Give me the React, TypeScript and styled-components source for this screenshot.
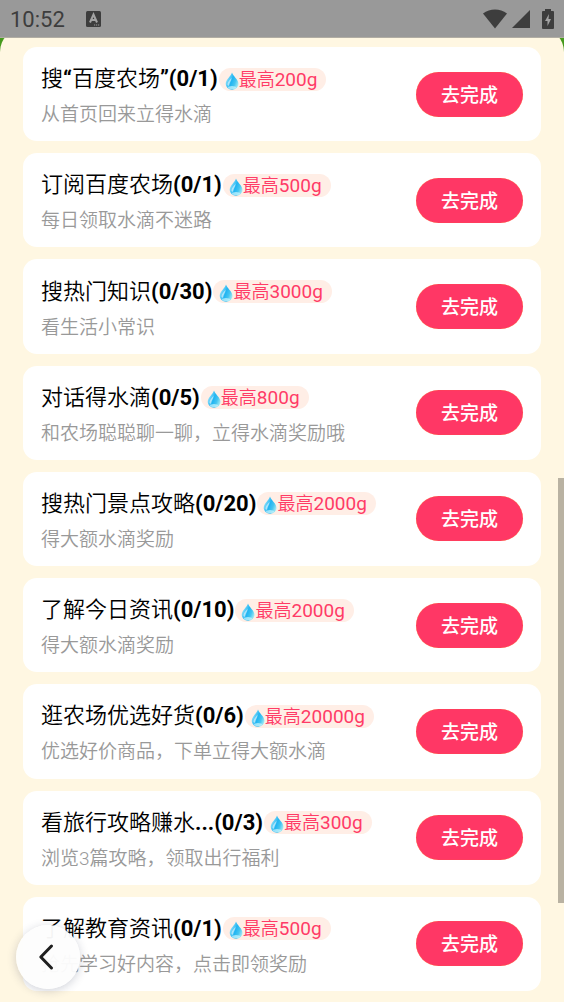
import React from "react";
import styled, { createGlobalStyle } from "styled-components";

const GlobalStyle = createGlobalStyle`
  * { box-sizing: border-box; }
  body {
    margin: 0;
    background: #469a1d;
    font-family: Roboto, "Noto Sans CJK SC", sans-serif;
    scrollbar-width: none;
  }
  body::-webkit-scrollbar { display: none; }
`;

const Page = styled.div`
  min-height: 100vh;
  padding-top: 28px;
  display: flex;
  flex-direction: column;
`;

const StatusBar = styled.header`
  position: fixed;
  inset: 0 0 auto;
  z-index: 2;
  height: 38px;
  padding: 0 10px;
  display: flex;
  align-items: center;
  justify-content: space-between;
  background: #999999;
  border-bottom: 1px solid #b1ada3;
  color: #3d3d3d;
`;

const StatusGroup = styled.div<{ $gap: number }>`
  display: flex;
  align-items: center;
  gap: ${({ $gap }) => $gap}px;

  svg { display: block; }
`;

const Clock = styled.time`
  padding-top: 2px;
  font-size: 22px;
  line-height: 26px;
`;

const BatterySlot = styled.span`
  padding-left: 7px;
`;

const Sheet = styled.main`
  flex: 1;
  display: flex;
  padding: 19px 23px 11px;
  border-radius: 24px 24px 0 0;
  background: #fff7e2;
`;

const TaskList = styled.ul`
  flex: 1;
  min-width: 0;
  margin: 0;
  padding: 0;
  list-style: none;
  display: grid;
  grid-auto-rows: 1fr;
  gap: 12px;
`;

const Card = styled.li`
  display: flex;
  align-items: center;
  justify-content: space-between;
  gap: 12px;
  padding: 8px 18px;
  border-radius: 14px;
  background: #ffffff;
`;

const TaskText = styled.div`
  min-width: 0;
  padding-top: 6px;
`;

const TitleRow = styled.div`
  display: flex;
  align-items: center;
  gap: 1px;
`;

const Title = styled.h2`
  margin: 0;
  font-size: 22px;
  line-height: 36px;
  font-weight: 350;
  color: #000000;
  white-space: nowrap;
`;

const Strong = styled.span`
  font-weight: 700;
`;

const Badge = styled.span`
  display: flex;
  align-items: center;
  height: 23px;
  padding: 0 9px 0 6px;
  border-radius: 12px;
  background: #ffeee6;
  color: #ff3b66;
  font-size: 18px;
  font-weight: 350;
  line-height: 23px;
  white-space: nowrap;

  svg { margin-top: 3px; }
`;

const Amount = styled.span`
  font-size: 19px;
  font-weight: 400;
`;

const Description = styled.p`
  margin: 0;
  font-size: 19px;
  font-weight: 350;
  line-height: 36px;
  color: #999999;
  white-space: nowrap;
`;

const GoButton = styled.button`
  flex: none;
  width: 107px;
  height: 45px;
  padding: 3px 0 0;
  border: 0;
  border-radius: 23px;
  background: #ff3765;
  box-shadow: inset 0 0 1px #ff7a1a;
  color: #ffffff;
  font-family: inherit;
  font-size: 19px;
  font-weight: 500;
  line-height: 28px;
  cursor: pointer;
`;

const BackButton = styled.button`
  position: fixed;
  left: 16px;
  bottom: 13px;
  z-index: 3;
  width: 64px;
  height: 64px;
  padding: 0 4px 0 0;
  border: 0;
  border-radius: 50%;
  display: grid;
  place-items: center;
  background: rgba(253, 253, 253, 0.96);
  box-shadow: 0 2px 10px rgba(40, 50, 80, 0.22);
  color: #1f1f1f;
  cursor: pointer;
`;

const ScrollThumb = styled.div`
  position: fixed;
  right: 0;
  bottom: 99px;
  z-index: 1;
  width: 6px;
  height: 425px;
  background: #b9b2a2;
`;

const DropIcon = () => (
  <svg width="14" height="18" viewBox="0 0 14 18" aria-hidden="true">
    <defs>
      <linearGradient id="drop" x1="0" y1="0.3" x2="1" y2="0.8">
        <stop offset="0" stopColor="#a5e9fc" />
        <stop offset="0.45" stopColor="#22b5f2" />
        <stop offset="0.7" stopColor="#45c5f0" />
        <stop offset="1" stopColor="#b9f2f4" />
      </linearGradient>
    </defs>
    <path
      d="M7 0.500C8 4 13.500 7.500 13.500 12A6.300 5.700 0 0 1 0.700 12C0.700 7.500 6 4 7 0.500Z"
      fill="url(#drop)"
    />
    <path d="M2.500 13C2.500 9.500 5 8 6.500 5.500C6.500 9 4.500 10 4 14Z" fill="#ffffff" opacity="0.55" />
    <ellipse cx="7" cy="15.500" rx="4" ry="1.500" fill="#d8fbff" opacity="0.65" />
  </svg>
);

const KeyboardIcon = () => (
  <svg width="15" height="16" viewBox="0 0 15 16" aria-hidden="true">
    <rect width="15" height="16" rx="1.500" fill="#3d3d3d" />
    <path
      d="M4 11.500L7.500 3.500L11 11.500M5.200 9H9.800"
      fill="none"
      stroke="#a3a3a3"
      strokeWidth="2"
    />
    <path d="M8 14h1.200M10 14h1.200M12 14h1.200" stroke="#999999" strokeWidth="1.200" />
  </svg>
);

const WifiIcon = () => (
  <svg width="24" height="20" viewBox="0 0 24 20" aria-hidden="true">
    <path d="M0 4.500C7 -0.800 17 -0.800 24 4.500L12 19.500Z" fill="currentColor" />
  </svg>
);

const SignalIcon = () => (
  <svg width="18" height="18" viewBox="0 0 18 18" aria-hidden="true">
    <path d="M18 0V18H0Z" fill="currentColor" />
  </svg>
);

const BatteryIcon = () => (
  <svg width="12" height="20" viewBox="0 0 12 20" aria-hidden="true">
    <path
      d="M3 0H9V2H11Q12 2 12 3V19Q12 20 11 20H1Q0 20 0 19V3Q0 2 1 2H3Z"
      fill="currentColor"
    />
    <path d="M7 5L3 12H5.500V17L9 10H6.500Z" fill="#a3a3a3" />
  </svg>
);

const ChevronIcon = () => (
  <svg width="16" height="28" viewBox="0 0 16 28" aria-hidden="true">
    <path
      d="M13.500 3L2.800 14L13.500 25"
      fill="none"
      stroke="currentColor"
      strokeWidth="3"
      strokeLinecap="round"
      strokeLinejoin="round"
    />
  </svg>
);

interface Task {
  title: React.ReactNode;
  progress: string;
  amount: string;
  description: string;
}

const tasks: Task[] = [
  {
    title: <>搜<Strong>“</Strong>百度农场<Strong>”</Strong></>,
    progress: "(0/1)",
    amount: "200g",
    description: "从首页回来立得水滴",
  },
  { title: "订阅百度农场", progress: "(0/1)", amount: "500g", description: "每日领取水滴不迷路" },
  { title: "搜热门知识", progress: "(0/30)", amount: "3000g", description: "看生活小常识" },
  { title: "对话得水滴", progress: "(0/5)", amount: "800g", description: "和农场聪聪聊一聊，立得水滴奖励哦" },
  { title: "搜热门景点攻略", progress: "(0/20)", amount: "2000g", description: "得大额水滴奖励" },
  { title: "了解今日资讯", progress: "(0/10)", amount: "2000g", description: "得大额水滴奖励" },
  { title: "逛农场优选好货", progress: "(0/6)", amount: "20000g", description: "优选好价商品，下单立得大额水滴" },
  {
    title: <>看旅行攻略赚水<Strong>...</Strong></>,
    progress: "(0/3)",
    amount: "300g",
    description: "浏览3篇攻略，领取出行福利",
  },
  { title: "了解教育资讯", progress: "(0/1)", amount: "500g", description: "抢先学习好内容，点击即领奖励" },
];

export default function App() {
  return (
    <>
      <GlobalStyle />
      <Page lang="zh-CN">
        <StatusBar>
          <StatusGroup $gap={21}>
            <Clock>10:52</Clock>
            <KeyboardIcon />
          </StatusGroup>
          <StatusGroup $gap={5}>
            <WifiIcon />
            <SignalIcon />
            <BatterySlot>
              <BatteryIcon />
            </BatterySlot>
          </StatusGroup>
        </StatusBar>
        <Sheet>
          <TaskList>
            {tasks.map((task, index) => (
              <Card key={index}>
                <TaskText>
                  <TitleRow>
                    <Title>
                      {task.title}
                      <Strong>{task.progress}</Strong>
                    </Title>
                    <Badge>
                      <DropIcon />
                      最高
                      <Amount>{task.amount}</Amount>
                    </Badge>
                  </TitleRow>
                  <Description>{task.description}</Description>
                </TaskText>
                <GoButton type="button">去完成</GoButton>
              </Card>
            ))}
          </TaskList>
        </Sheet>
        <ScrollThumb />
        <BackButton type="button" aria-label="返回">
          <ChevronIcon />
        </BackButton>
      </Page>
    </>
  );
}
